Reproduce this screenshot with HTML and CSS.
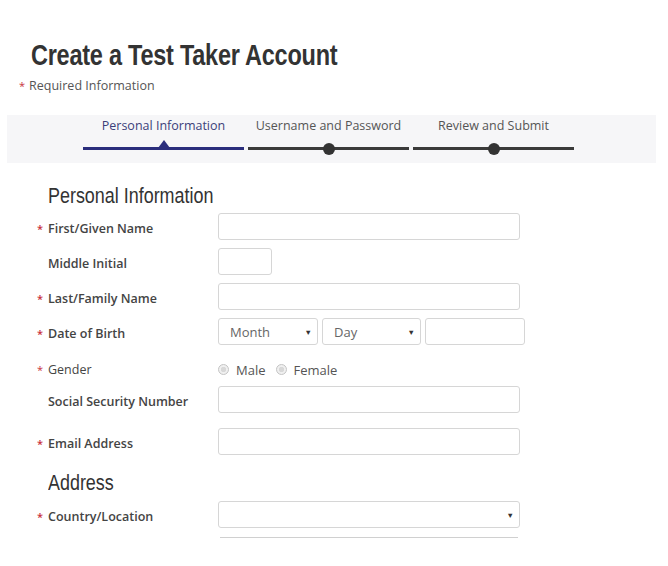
FILE: index.html
```html
<!DOCTYPE html>
<html>
<head>
<meta charset="utf-8">
<link rel="stylesheet" href="styles.css">
</head>
<body>
<div class="page">
  <h1 class="title">Create a Test Taker Account</h1>
  <p class="required-note"><span class="star">*</span>Required Information</p>

  <div class="stepper">
    <div class="step active">
      <span class="step-label">Personal Information</span>
      <span class="step-track"><span class="tri"></span></span>
    </div>
    <div class="step">
      <span class="step-label">Username and Password</span>
      <span class="step-track"><span class="dot"></span></span>
    </div>
    <div class="step">
      <span class="step-label">Review and Submit</span>
      <span class="step-track"><span class="dot"></span></span>
    </div>
  </div>

  <h2 class="section-title">Personal Information</h2>
  <div class="form">
    <div class="row">
      <label class="lbl"><span class="star">*</span>First/Given Name</label>
      <div class="field wide"></div>
    </div>
    <div class="row">
      <label class="lbl">Middle Initial</label>
      <div class="field short"></div>
    </div>
    <div class="row">
      <label class="lbl"><span class="star">*</span>Last/Family Name</label>
      <div class="field wide"></div>
    </div>
    <div class="row">
      <label class="lbl"><span class="star">*</span>Date of Birth</label>
      <div class="dob">
        <div class="field select month"><span>Month</span><span class="caret">▼</span></div>
        <div class="field select day"><span>Day</span><span class="caret">▼</span></div>
        <div class="field year"></div>
      </div>
    </div>
    <div class="row gender-row">
      <label class="lbl plain"><span class="star">*</span>Gender</label>
      <div class="radios">
        <span class="radio"></span><span class="radio-text">Male</span>
        <span class="radio"></span><span class="radio-text">Female</span>
      </div>
    </div>
    <div class="row">
      <label class="lbl">Social Security Number</label>
      <div class="field wide"></div>
    </div>
    <div class="row email-row">
      <label class="lbl"><span class="star">*</span>Email Address</label>
      <div class="field wide"></div>
    </div>
  </div>

  <h2 class="section-title address">Address</h2>
  <div class="form">
    <div class="row">
      <label class="lbl"><span class="star">*</span>Country/Location</label>
      <div class="field wide select"><span></span><span class="caret">▼</span></div>
    </div>
    <div class="row cut">
      <span class="spacer"></span>
      <div class="next-edge"></div>
    </div>
  </div>
</div>
</body>
</html>
```
FILE: styles.css
```css
* { box-sizing: border-box; }
html, body { margin: 0; padding: 0; background: #fff; }
body {
  font-family: "Open Sans", "Noto Sans", sans-serif;
  color: #444;
  overflow: hidden;
  height: 566px;
}
.page { width: 668px; }

.title {
  display: block;
  width: max-content;
  margin: 38px 0 0 31px;
  font-family: "Liberation Sans", Arial, sans-serif;
  font-weight: bold;
  font-size: 29px;
  line-height: 34px;
  color: #333;
  letter-spacing: -0.3px;
  transform: scaleX(0.81);
  transform-origin: 0 0;
}
.required-note {
  margin: 6px 0 0 19px;
  font-size: 12.5px;
  line-height: 16px;
  color: #555;
}
.star {
  color: #c8323c;
  font-size: 11px;
  margin-right: 4px;
}

.stepper {
  margin: 21px 12px 0 7px;
  height: 48px;
  background: #f6f6f8;
  display: flex;
  padding-left: 76px;
  gap: 4px;
}
.step {
  width: 161px;
  display: flex;
  flex-direction: column;
  align-items: center;
}
.step-label {
  font-size: 12.5px;
  line-height: 16px;
  margin-top: 3px;
  color: #555;
}
.step.active .step-label { color: #3c3f7a; }
.step-track {
  margin-top: 13px;
  width: 100%;
  height: 3px;
  background: #3a3a3a;
  position: relative;
}
.step.active .step-track { background: #2a2d7c; }
.dot {
  position: absolute;
  left: 50%;
  top: 50%;
  width: 12px;
  height: 12px;
  margin: -6px 0 0 -6px;
  border-radius: 50%;
  background: #333;
}
.tri {
  position: absolute;
  left: 50%;
  bottom: 2px;
  margin-left: -6px;
  width: 0; height: 0;
  border-left: 6px solid transparent;
  border-right: 6px solid transparent;
  border-bottom: 8px solid #2a2d7c;
}

.section-title {
  display: block;
  width: max-content;
  margin: 19px 0 0 48px;
  font-family: "Liberation Sans", Arial, sans-serif;
  font-weight: normal;
  font-size: 22px;
  line-height: 28px;
  color: #333;
  transform: scaleX(0.815);
  transform-origin: 0 0;
}
.section-title.address { margin-top: 14px; }

.form {
  display: flex;
  flex-direction: column;
  gap: 8px;
  margin-top: 3px;
}
.section-title.address + .form { margin-top: 4px; }
.row {
  display: flex;
  align-items: center;
  padding-left: 37px;
}
.lbl {
  width: 181px;
  font-size: 12.5px;
  font-weight: 600;
  color: #444;
  padding: 4px 0 0 11px;
  position: relative;
}
.lbl .star {
  position: absolute;
  left: 0;
  top: 5px;
}
.lbl.plain { font-weight: normal; padding-top: 0; }
.lbl.plain .star { top: 1px; }
.spacer { width: 181px; }
.field {
  height: 27px;
  border: 1px solid #d6d6d6;
  border-radius: 3px;
  background: #fff;
}
.field.wide { width: 302px; }
.field.short { width: 54px; }
.dob { display: flex; gap: 4px; }
.field.month { width: 100px; }
.field.day { width: 99px; }
.field.year { width: 100px; }
.select {
  display: flex;
  align-items: center;
  justify-content: space-between;
  padding: 0 5px 0 11px;
  font-size: 13px;
  color: #666;
}
.caret { font-size: 7.5px; color: #333; }

.gender-row { height: 25px; margin-top: 4px; margin-bottom: -4px; }
.radios { display: flex; align-items: center; font-size: 13px; color: #555; }
.radio {
  width: 11px; height: 11px;
  border-radius: 50%;
  border: 1px solid #c4c4c4;
  background: radial-gradient(circle, #d8d8d8 0 2.5px, #f0f0f0 3px);
  margin: 0 7px 0 0;
}
.radio-text { margin-right: 10px; }
.email-row { margin-top: 7px; }

.row.cut { margin-top: 1px; }
.next-edge {
  width: 298px;
  margin-left: 2px;
  border-top: 1px solid #d0d0d0;
  height: 1px;
}
```
